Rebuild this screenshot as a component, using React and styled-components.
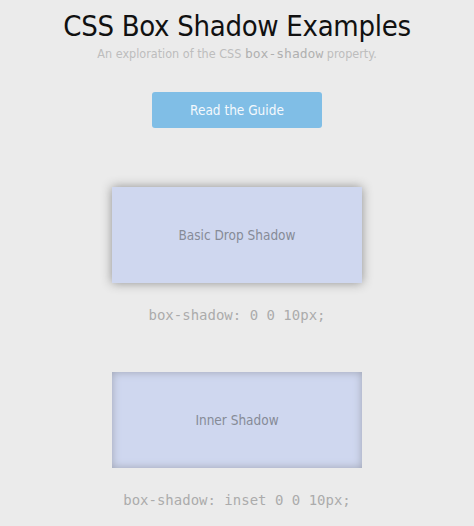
import React from 'react';
import styled, { createGlobalStyle } from 'styled-components';

const GlobalStyle = createGlobalStyle`
  html, body {
    margin: 0;
    padding: 0;
    background: #ebebeb;
  }
  body {
    font-family: "DejaVu Sans Condensed", "Liberation Sans", sans-serif;
  }
`;

const examples = [
  { label: 'Basic Drop Shadow', rule: 'box-shadow: 0 0 10px;', inset: false },
  { label: 'Inner Shadow', rule: 'box-shadow: inset 0 0 10px;', inset: true },
];

const App = () => {
  return (
    <Page>
      <GlobalStyle />
      <Header>
        <Title>CSS Box Shadow Examples</Title>
        <Subtitle>
          An exploration of the CSS <code>box-shadow</code> property.
        </Subtitle>
      </Header>
      <GuideButton>Read the Guide</GuideButton>

      {examples.map(ex => (
        <Example key={ex.label}>
          <ShadowBox $inset={ex.inset}>{ex.label}</ShadowBox>
          <Rule>{ex.rule}</Rule>
        </Example>
      ))}
    </Page>
  );
};

//Component Styles
const Page = styled.div`
  display: flex;
  flex-direction: column;
  align-items: center;
  min-height: 526px;
  padding-top: 8px;
  box-sizing: border-box;
`;

const Header = styled.div`
  text-align: center;
`;

const Title = styled.h1`
  margin: 0;
  font-size: 29px;
  font-weight: 400;
  color: #111;
  line-height: 36px;
  letter-spacing: -0.3px;
`;

const Subtitle = styled.p`
  margin: 2px 0 0;
  font-size: 12.5px;
  color: #bdbdbd;

  code {
    font-family: "DejaVu Sans Mono", monospace;
    font-size: 13px;
    color: #b0b0b0;
  }
`;

const GuideButton = styled.button`
  margin-top: 31px;
  width: 170px;
  height: 36px;
  border: none;
  border-radius: 3px;
  background: #80bee6;
  color: #f4f9fd;
  font-family: inherit;
  font-size: 13.5px;
`;

const Example = styled.div`
  display: flex;
  flex-direction: column;
  align-items: center;
  margin-top: 59px;

  & + & {
    margin-top: 49px;
  }
`;

const ShadowBox = styled.div`
  width: 250px;
  height: 96px;
  display: flex;
  align-items: center;
  justify-content: center;
  background: #cfd7ef;
  color: #868b97;
  font-size: 13.5px;
  box-shadow: ${p => (p.$inset ? 'inset 0 0 8px #9ea3b2' : '0 0 10px #8f8f8f')};
`;

const Rule = styled.div`
  margin-top: 24px;
  font-family: "DejaVu Sans Mono", monospace;
  font-size: 14px;
  color: #ababab;
`;

export default App;
